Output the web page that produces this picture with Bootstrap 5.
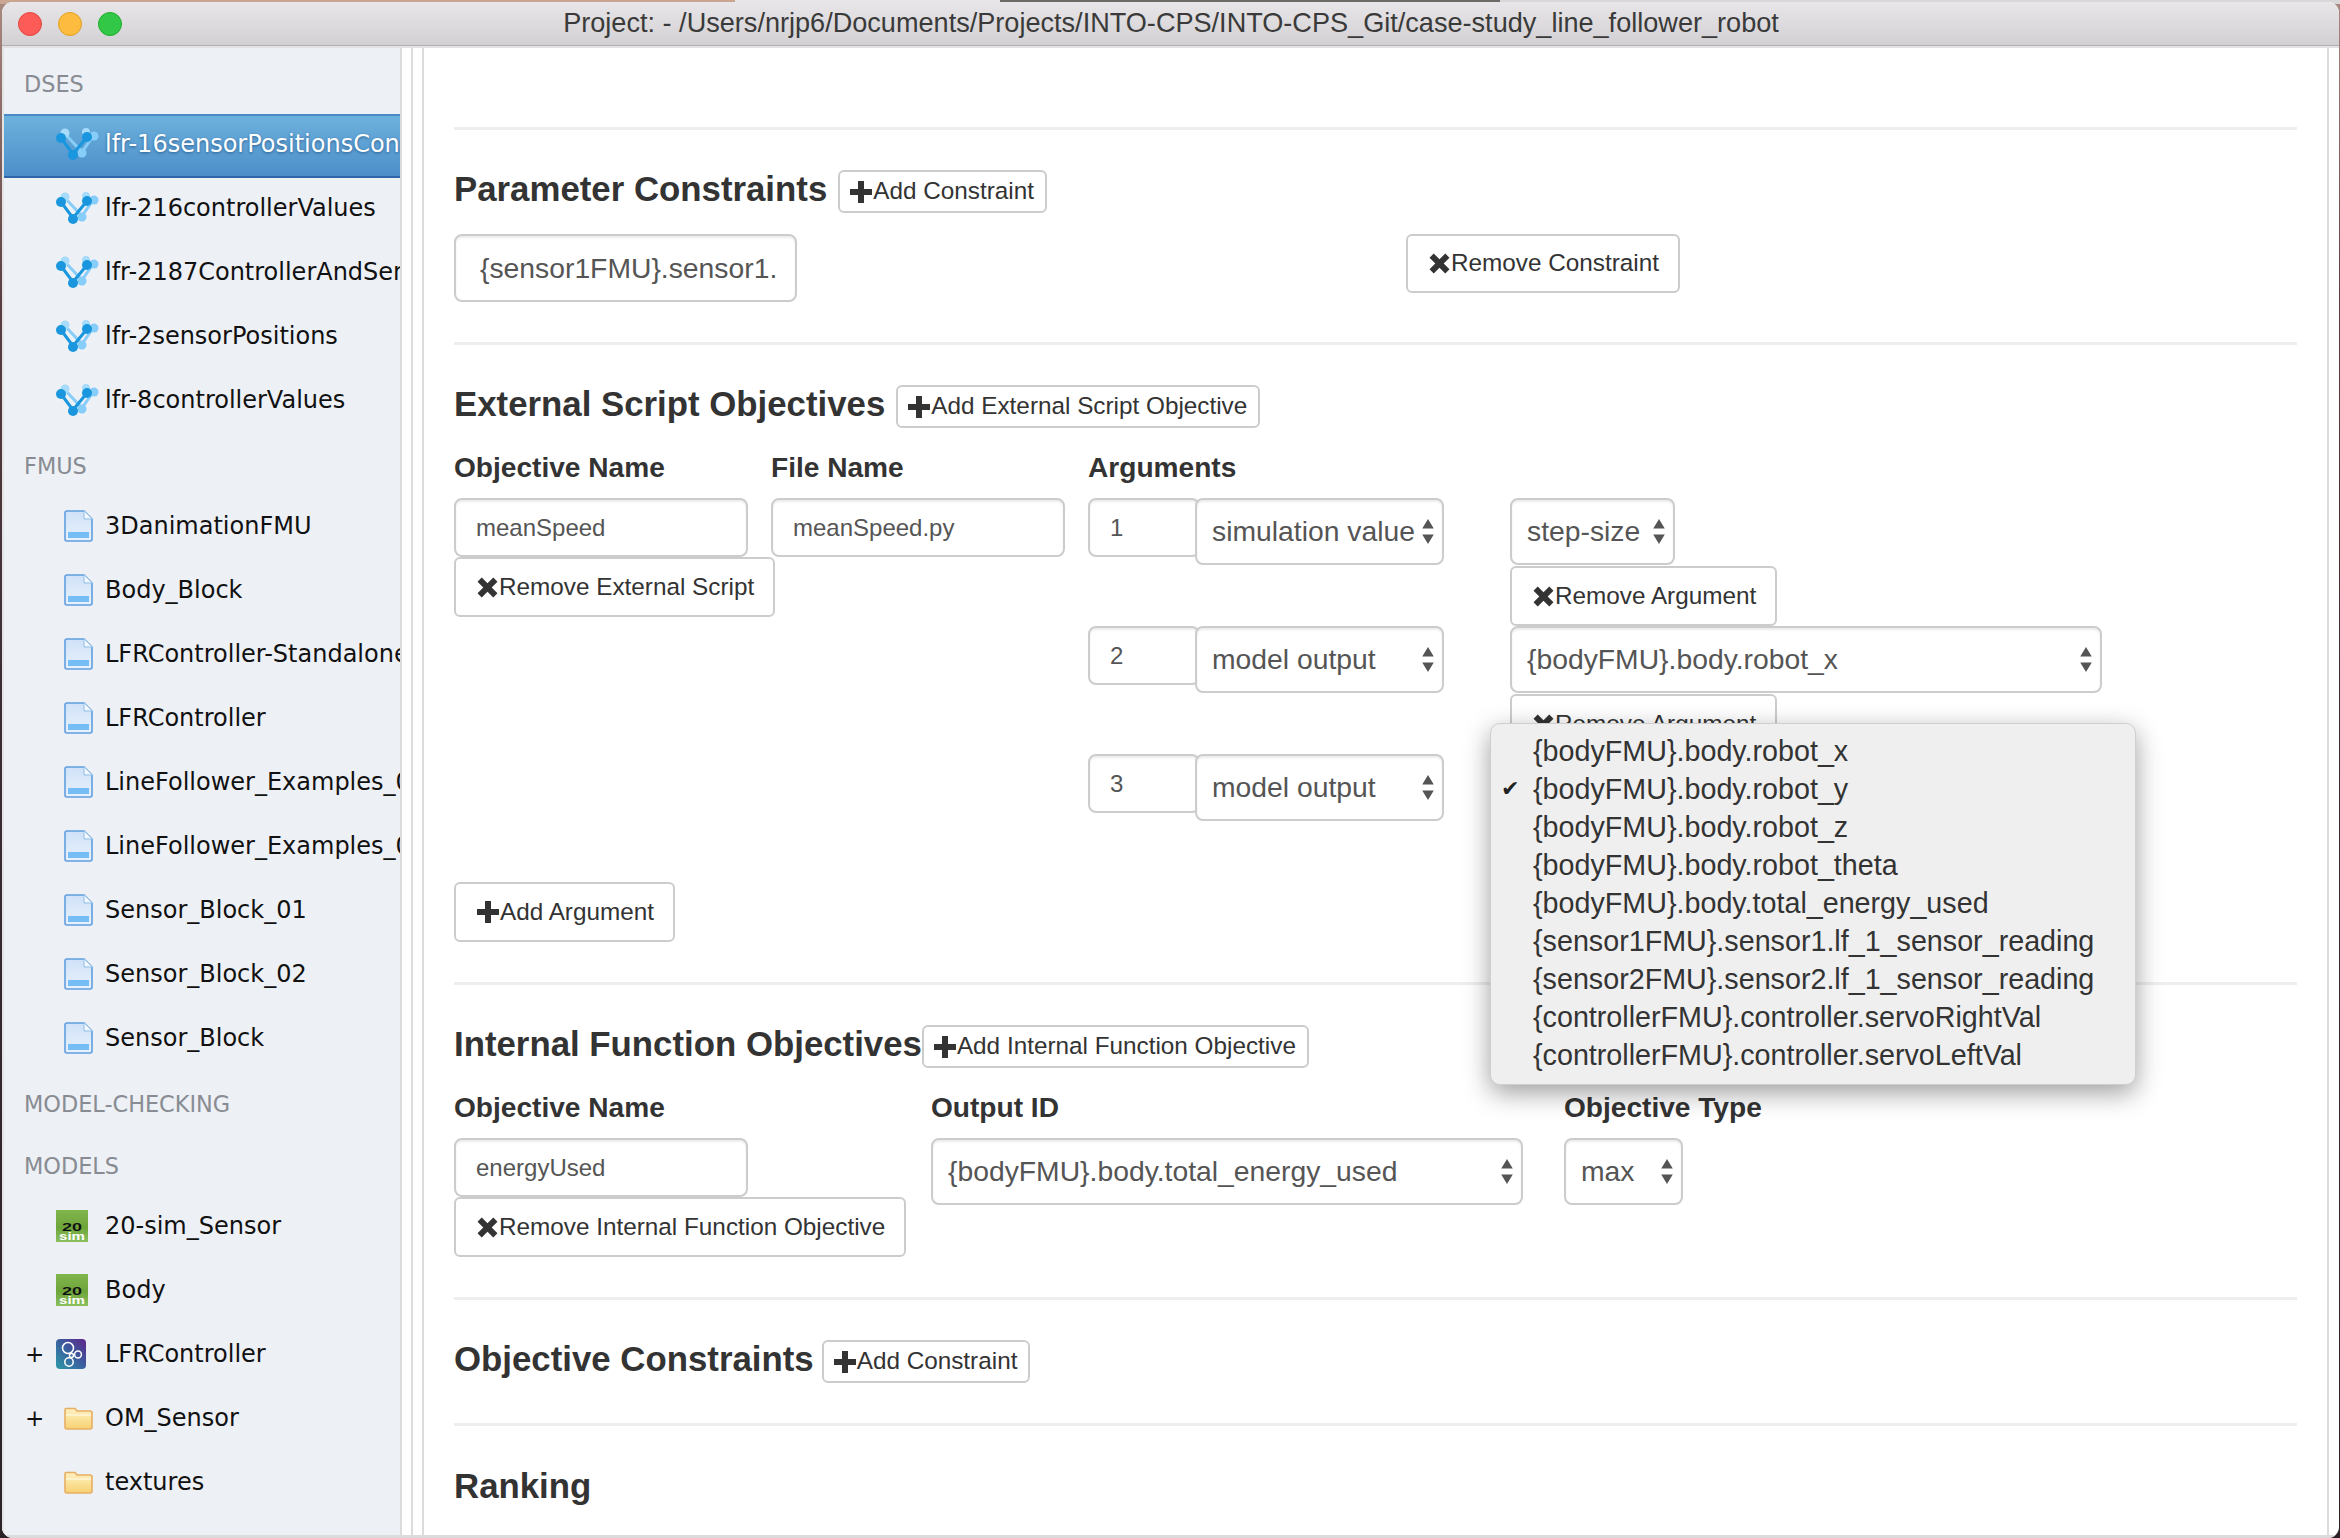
<!DOCTYPE html>
<html lang="en">
<head>
    <meta charset="UTF-8">
    <meta name="viewport" content="width=device-width, initial-scale=1.0">
    <title>INTO-CPS App - DSE configuration</title>
    <link href="https://cdn.jsdelivr.net/npm/bootstrap@5.3.0/dist/css/bootstrap.min.css" rel="stylesheet">
    <style>
        html, body {
            height: 1538px;
            overflow: hidden;
        }
        body {
            margin: 0;
            font-family: "Liberation Sans", Arial, sans-serif;
            color: #333;
            background:
                linear-gradient(90deg, #c8a692 0 735px, #e6e6e6 735px 1000px, #6e6a68 1000px 1500px, #d8d8d8 1500px 2340px) top left / 100% 4px no-repeat,
                linear-gradient(180deg, #a88a80 0, #5a3d42 300px, #3a2c34 700px, #2b2226 1538px);
        }
        .svg-sprite { display: block; width: 0; height: 0; overflow: hidden; }
        .app-window {
            width: 2337px;
            height: 1536px;
            margin: 2px 0 0 2px;
            background: #fff;
            border-radius: 11px;
            overflow: hidden;
        }
        .title-bar {
            height: 44px;
            flex: none;
            background: linear-gradient(180deg, #e8e6e8, #d2d0d2);
            border-bottom: 1px solid #b0aeb0;
        }
        .light-dot { width: 24px; height: 24px; border-radius: 50%; border: 1px solid; }
        .light-close { background: #fc5b57; border-color: #e2463f; }
        .light-min { background: #fdbc40; border-color: #dfa023; }
        .light-max { background: #33c748; border-color: #1dad2b; }
        .traffic-lights { gap: 16px; padding-left: 16px; width: 0; }
        .title-text {
            font-size: 27.1px;
            color: #3a3a3a;
            padding-right: 15px;
        }
        .pane-wrap {
            height: 1492px;
            border-top: 2px solid #e2e2e2;
            border-bottom: 3px solid #dcdcdc;
        }

        /* left tree */
        .side-pane {
            width: 400px;
            flex: none;
            background: #edf0f5;
            border-left: 2px solid #e4e4e4;
            border-right: 2px solid #dcdcdc;
            padding-top: 20px;
            font-family: "DejaVu Sans", Verdana, sans-serif;
            overflow: hidden;
        }
        .tree-head {
            font-size: 22.4px;
            line-height: 32px;
            color: #888c92;
            padding-left: 20px;
            margin-bottom: 11px;
        }
        .tree-head-first { margin-bottom: 14px; }
        .tree-head-fmus { margin-top: 16px; }
        .tree-head-mc { margin-top: 19px; }
        .tree-head-models { margin-top: 30px; margin-bottom: 12px; }
        .tree-row {
            height: 64px;
            padding-left: 21px;
            font-size: 24px;
            color: #111;
            white-space: nowrap;
        }
        .tree-row-dse { padding-bottom: 5px; }
        .tree-row-file { padding-top: 2px; }
        .tree-row.is-active {
            background: linear-gradient(180deg, #6db1dd, #4c8fca);
            border-top: 2px solid #4a8ac6;
            border-bottom: 2px solid #2f66a9;
            color: #fff;
            text-shadow: 0 1px 3px rgba(0,40,90,.55);
        }
        .tree-exp { width: 31px; flex: none; font-size: 23px; }
        .tree-ico { width: 49px; flex: none; }
        .tree-ico svg { display: block; }
        .ico-inset { margin-left: 8px; }
        .split-gap { width: 11px; flex: none; border-right: 2px solid #dcdcdc; }

        /* form pane */
        .form-pane {
            flex: 1 1 0;
            min-width: 0;
            padding: 79px 30px 0;
            border-right: 2px solid #dcdcdc;
            margin-right: 10px;
            overflow: hidden;
        }
        .form-hr { margin: 0; border: 0; border-top: 3px solid #eee; opacity: 1; }
        .sect-gap { margin-top: 40px; }
        .sect-head { height: 43px; }
        .sect-title {
            font-size: 34.8px;
            font-weight: 700;
            color: #333;
            margin: 0 11px 0 0;
            padding-bottom: 5px;
            white-space: nowrap;
        }
        .sect-title-tight { margin-right: 0; }
        .sect-title-near { margin-right: 8px; }
        .sect-a { margin-top: 40px; }
        .sect-b { margin-top: 41px; }
        .sect-ext { margin-top: 40px; }
        .constraint-row { margin-top: 21px; }
        .fld-label {
            font-size: 28.1px;
            font-weight: 700;
            line-height: 34px;
            margin: 23px 0 13px;
            color: #333;
            white-space: nowrap;
        }
        .form-control, .form-select {
            border: 2px solid #ccc;
            border-radius: 8px;
            color: #555;
            box-shadow: inset 0 2px 2px rgba(0,0,0,.075);
        }
        .form-control { height: 59px; padding: 0 20px; font-size: 24px; }
        .fld-name { width: 294px; }
        .fld-num { width: 112px; flex: none; }
        .fld-constraint { width: 343px; height: 68px; font-size: 28.3px; padding: 0 8px 0 24px; }
        .form-select {
            height: 67px;
            padding: 0 26px 0 15px;
            font-size: 28.3px;
            background-image: url("data:image/svg+xml,%3Csvg xmlns='http://www.w3.org/2000/svg' viewBox='0 0 12 26'%3E%3Cpath fill='%23555' d='M6 0l6 10H0zM6 26L0 16h12z'/%3E%3C/svg%3E");
            background-repeat: no-repeat;
            background-position: right 8px center;
            background-size: 12px 25px;
        }
        .sel-kind { width: 249px; flex: none; margin-left: -5px; }
        .sel-step { width: 165px; }
        .sel-wide { width: 592px; }
        .sel-type { width: 119px; }
        .btn-plain {
            display: inline-flex;
            align-items: center;
            height: 60px;
            padding: 0 19px 0 21px;
            font-size: 24.3px;
            color: #333;
            background: #fff;
            border: 2px solid #ccc;
            border-radius: 6px;
            white-space: nowrap;
        }
        .btn-tiny { height: 43px; padding: 0 11px 0 10px; }
        .btn-rm-constraint { margin-left: 609px; height: 59px; }
        .btn-plain svg { flex: none; margin-right: 1px; }
        .col-obj { width: 317px; flex: none; }
        .col-args { flex: 1 1 0; min-width: 0; }
        .args-list { position: relative; }
        .arg-row { height: 128px; }
        .arg-left { width: 422px; flex: none; }
        .arg-right .btn-plain { margin-top: 1px; }
        .col-int-a { width: 477px; flex: none; }
        .col-int-b { width: 633px; flex: none; }
        .clipped-label { margin-top: 20px; }

        /* open select popup */
        .opt-menu {
            position: absolute;
            left: 402px;
            top: 225px;
            width: 646px;
            margin: 0;
            padding: 8px 0 10px;
            list-style: none;
            background: #efefef;
            border: 1px solid #cfcfcf;
            border-radius: 10px;
            box-shadow: 0 8px 26px rgba(0,0,0,.38);
            font-size: 28.7px;
            line-height: 38px;
            color: #333;
            z-index: 5;
        }
        .opt-menu li { display: flex; padding-left: 10px; white-space: nowrap; }
        .opt-check { width: 32px; flex: none; font-family: "DejaVu Sans", sans-serif; font-size: 22px; color: #222; }
    </style>
</head>
<body>
    <!-- icons used over and over in the tree -->
    <svg class="svg-sprite" xmlns="http://www.w3.org/2000/svg">
        <defs>
            <linearGradient id="gradFile" x1="0" y1="0" x2="0" y2="1">
                <stop offset="0" stop-color="#cfe2f8"/>
                <stop offset="1" stop-color="#e8f1fb"/>
            </linearGradient>
            <linearGradient id="gradSim" x1="0" y1="0" x2="0" y2="1">
                <stop offset="0" stop-color="#80b54c"/>
                <stop offset=".55" stop-color="#6ea53a"/>
                <stop offset="1" stop-color="#8cc060"/>
            </linearGradient>
            <linearGradient id="gradCosim" x1="0" y1="1" x2="1" y2="0">
                <stop offset="0" stop-color="#2a9aa8"/>
                <stop offset=".55" stop-color="#3c5a9e"/>
                <stop offset="1" stop-color="#5f2389"/>
            </linearGradient>
            <linearGradient id="gradFolder" x1="0" y1="0" x2="0" y2="1">
                <stop offset="0" stop-color="#fdf0c4"/>
                <stop offset=".5" stop-color="#fbe39a"/>
                <stop offset="1" stop-color="#f8cf72"/>
            </linearGradient>
        </defs>
        <symbol id="icoDse" viewBox="0 0 44 32">
            <path d="M9 6 L26 24 L37 8" fill="none" stroke="#86cdf9" stroke-width="3"/>
            <circle cx="9" cy="5" r="4.5" fill="#a6dbfb"/>
            <circle cx="30" cy="4" r="4" fill="#a6dbfb"/>
            <circle cx="38" cy="8" r="4.5" fill="#86cdf9"/>
            <circle cx="26" cy="25" r="4.5" fill="#86cdf9"/>
            <path d="M5 10 L17 26 L31 9" fill="none" stroke="#1a96de" stroke-width="3"/>
            <circle cx="5" cy="10" r="5" fill="#1a96de"/>
            <circle cx="31" cy="9" r="5" fill="#1a96de"/>
            <circle cx="17" cy="27" r="5" fill="#1a96de"/>
        </symbol>
        <symbol id="icoFile" viewBox="0 0 29 32">
            <path d="M3 1 H20 L28 9 V29 Q28 31 26 31 H3 Q1 31 1 29 V3 Q1 1 3 1Z" fill="url(#gradFile)" stroke="#5f9fe0" stroke-width="1.6"/>
            <path d="M20 1 V9 H28" fill="#f4f8fd" stroke="#8fbcea" stroke-width="1"/>
            <rect x="4" y="22" width="21" height="6" fill="#74bdf5"/>
        </symbol>
        <symbol id="icoSim" viewBox="0 0 32 32">
            <rect width="32" height="32" fill="url(#gradSim)"/>
            <text x="16" y="21" text-anchor="middle" font-family="Liberation Sans, sans-serif" font-size="11" font-weight="700" textLength="20" lengthAdjust="spacingAndGlyphs" fill="#111">20</text>
            <text x="16" y="30" text-anchor="middle" font-family="Liberation Sans, sans-serif" font-size="11" font-weight="700" textLength="26" lengthAdjust="spacingAndGlyphs" fill="#fff">sim</text>
        </symbol>
        <symbol id="icoCosim" viewBox="0 0 30 30">
            <rect width="30" height="30" rx="4" fill="url(#gradCosim)"/>
            <g fill="none" stroke="#fff" stroke-width="1.5">
                <circle cx="12" cy="9" r="5.5"/>
                <circle cx="22" cy="15.5" r="3.4"/>
                <circle cx="15.5" cy="16.5" r="2"/>
                <circle cx="13" cy="23" r="4.2"/>
            </g>
        </symbol>
        <symbol id="icoFolder" viewBox="0 0 29 23">
            <path d="M2 1.5 H11 L13 4 H26 Q28 4 28 6 V20 Q28 22 26 22 H3 Q1 22 1 20 V3 Q1 1.5 2 1.5Z" fill="url(#gradFolder)" stroke="#e8ae62" stroke-width="1.6"/>
            <path d="M2 8 H27" stroke="#fff6da" stroke-width="1.4"/>
        </symbol>
        <symbol id="glyphPlus" viewBox="0 0 22 22">
            <path d="M8 0 H14 V8 H22 V14 H14 V22 H8 V14 H0 V8 H8Z"/>
        </symbol>
        <symbol id="glyphCross" viewBox="0 0 20 20">
            <path d="M4.5 .5 L10 6 L15.5 .5 L19.5 4.5 L14 10 L19.5 15.5 L15.5 19.5 L10 14 L4.5 19.5 L.5 15.5 L6 10 L.5 4.5Z"/>
        </symbol>
    </svg>

    <div class="app-window d-flex flex-column">
        <header class="title-bar d-flex align-items-center">
            <div class="traffic-lights d-flex">
                <span class="light-dot light-close flex-shrink-0"></span>
                <span class="light-dot light-min flex-shrink-0"></span>
                <span class="light-dot light-max flex-shrink-0"></span>
            </div>
            <div class="title-text flex-fill text-center text-nowrap">Project: - /Users/nrjp6/Documents/Projects/INTO-CPS/INTO-CPS_Git/case-study_line_follower_robot</div>
        </header>

        <div class="pane-wrap d-flex">
            <!-- Project tree -->
            <aside class="side-pane">
                <div class="tree-head tree-head-first">DSES</div>
                <div class="tree-row tree-row-dse is-active d-flex align-items-center"><span class="tree-exp"></span><span class="tree-ico"><svg width="44" height="32"><use href="#icoDse"/></svg></span>lfr-16sensorPositionsConstraint</div>
                <div class="tree-row tree-row-dse d-flex align-items-center"><span class="tree-exp"></span><span class="tree-ico"><svg width="44" height="32"><use href="#icoDse"/></svg></span>lfr-216controllerValues</div>
                <div class="tree-row tree-row-dse d-flex align-items-center"><span class="tree-exp"></span><span class="tree-ico"><svg width="44" height="32"><use href="#icoDse"/></svg></span>lfr-2187ControllerAndSensors</div>
                <div class="tree-row tree-row-dse d-flex align-items-center"><span class="tree-exp"></span><span class="tree-ico"><svg width="44" height="32"><use href="#icoDse"/></svg></span>lfr-2sensorPositions</div>
                <div class="tree-row tree-row-dse d-flex align-items-center"><span class="tree-exp"></span><span class="tree-ico"><svg width="44" height="32"><use href="#icoDse"/></svg></span>lfr-8controllerValues</div>

                <div class="tree-head tree-head-fmus">FMUS</div>
                <div class="tree-row tree-row-file d-flex align-items-center"><span class="tree-exp"></span><span class="tree-ico"><svg class="ico-inset" width="29" height="32"><use href="#icoFile"/></svg></span>3DanimationFMU</div>
                <div class="tree-row tree-row-file d-flex align-items-center"><span class="tree-exp"></span><span class="tree-ico"><svg class="ico-inset" width="29" height="32"><use href="#icoFile"/></svg></span>Body_Block</div>
                <div class="tree-row tree-row-file d-flex align-items-center"><span class="tree-exp"></span><span class="tree-ico"><svg class="ico-inset" width="29" height="32"><use href="#icoFile"/></svg></span>LFRController-Standalone</div>
                <div class="tree-row tree-row-file d-flex align-items-center"><span class="tree-exp"></span><span class="tree-ico"><svg class="ico-inset" width="29" height="32"><use href="#icoFile"/></svg></span>LFRController</div>
                <div class="tree-row tree-row-file d-flex align-items-center"><span class="tree-exp"></span><span class="tree-ico"><svg class="ico-inset" width="29" height="32"><use href="#icoFile"/></svg></span>LineFollower_Examples_01</div>
                <div class="tree-row tree-row-file d-flex align-items-center"><span class="tree-exp"></span><span class="tree-ico"><svg class="ico-inset" width="29" height="32"><use href="#icoFile"/></svg></span>LineFollower_Examples_02</div>
                <div class="tree-row tree-row-file d-flex align-items-center"><span class="tree-exp"></span><span class="tree-ico"><svg class="ico-inset" width="29" height="32"><use href="#icoFile"/></svg></span>Sensor_Block_01</div>
                <div class="tree-row tree-row-file d-flex align-items-center"><span class="tree-exp"></span><span class="tree-ico"><svg class="ico-inset" width="29" height="32"><use href="#icoFile"/></svg></span>Sensor_Block_02</div>
                <div class="tree-row tree-row-file d-flex align-items-center"><span class="tree-exp"></span><span class="tree-ico"><svg class="ico-inset" width="29" height="32"><use href="#icoFile"/></svg></span>Sensor_Block</div>

                <div class="tree-head tree-head-mc">MODEL-CHECKING</div>
                <div class="tree-head tree-head-models">MODELS</div>
                <div class="tree-row d-flex align-items-center"><span class="tree-exp"></span><span class="tree-ico"><svg width="32" height="32"><use href="#icoSim"/></svg></span>20-sim_Sensor</div>
                <div class="tree-row d-flex align-items-center"><span class="tree-exp"></span><span class="tree-ico"><svg width="32" height="32"><use href="#icoSim"/></svg></span>Body</div>
                <div class="tree-row d-flex align-items-center"><span class="tree-exp">+</span><span class="tree-ico"><svg width="30" height="30"><use href="#icoCosim"/></svg></span>LFRController</div>
                <div class="tree-row d-flex align-items-center"><span class="tree-exp">+</span><span class="tree-ico"><svg class="ico-inset" width="29" height="23"><use href="#icoFolder"/></svg></span>OM_Sensor</div>
                <div class="tree-row d-flex align-items-center"><span class="tree-exp"></span><span class="tree-ico"><svg class="ico-inset" width="29" height="23"><use href="#icoFolder"/></svg></span>textures</div>
            </aside>
            <div class="split-gap"></div>
            <div class="split-gap"></div>

            <!-- DSE configuration form -->
            <main class="form-pane">
                <hr class="form-hr">

                <section class="sect-a">
                    <div class="sect-head d-flex align-items-center">
                        <h3 class="sect-title">Parameter Constraints</h3>
                        <button type="button" class="btn btn-plain btn-tiny"><svg width="22" height="22" fill="#333"><use href="#glyphPlus"/></svg>Add Constraint</button>
                    </div>
                    <div class="d-flex constraint-row">
                        <input class="form-control fld-constraint" type="text" value="{sensor1FMU}.sensor1.">
                        <button type="button" class="btn btn-plain btn-rm-constraint"><svg width="21" height="21" fill="#333"><use href="#glyphCross"/></svg>Remove Constraint</button>
                    </div>
                </section>
                <hr class="form-hr sect-gap">

                <section class="sect-ext">
                    <div class="sect-head d-flex align-items-center">
                        <h3 class="sect-title">External Script Objectives</h3>
                        <button type="button" class="btn btn-plain btn-tiny"><svg width="22" height="22" fill="#333"><use href="#glyphPlus"/></svg>Add External Script Objective</button>
                    </div>
                    <div class="d-flex">
                        <div class="col-obj">
                            <label class="form-label fld-label d-block">Objective Name</label>
                            <input class="form-control fld-name" type="text" value="meanSpeed">
                            <button type="button" class="btn btn-plain"><svg width="21" height="21" fill="#333"><use href="#glyphCross"/></svg>Remove External Script</button>
                        </div>
                        <div class="col-obj">
                            <label class="form-label fld-label d-block">File Name</label>
                            <input class="form-control fld-name" type="text" value="meanSpeed.py">
                        </div>
                        <div class="col-args">
                            <label class="form-label fld-label d-block">Arguments</label>
                            <div class="args-list">
                                <div class="arg-row d-flex">
                                    <div class="arg-left d-flex align-items-start">
                                        <input class="form-control fld-num" type="text" value="1">
                                        <select class="form-select sel-kind"><option>simulation value</option></select>
                                    </div>
                                    <div class="arg-right d-flex flex-column align-items-start">
                                        <select class="form-select sel-step"><option>step-size</option></select>
                                        <button type="button" class="btn btn-plain"><svg width="21" height="21" fill="#333"><use href="#glyphCross"/></svg>Remove Argument</button>
                                    </div>
                                </div>
                                <div class="arg-row d-flex">
                                    <div class="arg-left d-flex align-items-start">
                                        <input class="form-control fld-num" type="text" value="2">
                                        <select class="form-select sel-kind"><option>model output</option></select>
                                    </div>
                                    <div class="arg-right d-flex flex-column align-items-start">
                                        <select class="form-select sel-wide"><option>{bodyFMU}.body.robot_x</option></select>
                                        <button type="button" class="btn btn-plain"><svg width="21" height="21" fill="#333"><use href="#glyphCross"/></svg>Remove Argument</button>
                                    </div>
                                </div>
                                <div class="arg-row d-flex">
                                    <div class="arg-left d-flex align-items-start">
                                        <input class="form-control fld-num" type="text" value="3">
                                        <select class="form-select sel-kind"><option>model output</option></select>
                                    </div>
                                    <div class="arg-right d-flex flex-column align-items-start">
                                        <select class="form-select sel-wide"><option>{bodyFMU}.body.robot_y</option></select>
                                        <button type="button" class="btn btn-plain"><svg width="21" height="21" fill="#333"><use href="#glyphCross"/></svg>Remove Argument</button>
                                    </div>
                                </div>
                                <ul class="opt-menu">
                                    <li><span class="opt-check"></span>{bodyFMU}.body.robot_x</li>
                                    <li><span class="opt-check">✔</span>{bodyFMU}.body.robot_y</li>
                                    <li><span class="opt-check"></span>{bodyFMU}.body.robot_z</li>
                                    <li><span class="opt-check"></span>{bodyFMU}.body.robot_theta</li>
                                    <li><span class="opt-check"></span>{bodyFMU}.body.total_energy_used</li>
                                    <li><span class="opt-check"></span>{sensor1FMU}.sensor1.lf_1_sensor_reading</li>
                                    <li><span class="opt-check"></span>{sensor2FMU}.sensor2.lf_1_sensor_reading</li>
                                    <li><span class="opt-check"></span>{controllerFMU}.controller.servoRightVal</li>
                                    <li><span class="opt-check"></span>{controllerFMU}.controller.servoLeftVal</li>
                                </ul>
                            </div>
                        </div>
                    </div>
                    <button type="button" class="btn btn-plain"><svg width="22" height="22" fill="#333"><use href="#glyphPlus"/></svg>Add Argument</button>
                </section>
                <hr class="form-hr sect-gap">

                <section class="sect-a">
                    <div class="sect-head d-flex align-items-center">
                        <h3 class="sect-title sect-title-tight">Internal Function Objectives</h3>
                        <button type="button" class="btn btn-plain btn-tiny"><svg width="22" height="22" fill="#333"><use href="#glyphPlus"/></svg>Add Internal Function Objective</button>
                    </div>
                    <div class="d-flex">
                        <div class="col-int-a">
                            <label class="form-label fld-label d-block">Objective Name</label>
                            <input class="form-control fld-name" type="text" value="energyUsed">
                            <button type="button" class="btn btn-plain"><svg width="21" height="21" fill="#333"><use href="#glyphCross"/></svg>Remove Internal Function Objective</button>
                        </div>
                        <div class="col-int-b">
                            <label class="form-label fld-label d-block">Output ID</label>
                            <select class="form-select sel-wide"><option>{bodyFMU}.body.total_energy_used</option></select>
                        </div>
                        <div>
                            <label class="form-label fld-label d-block">Objective Type</label>
                            <select class="form-select sel-type"><option>max</option></select>
                        </div>
                    </div>
                </section>
                <hr class="form-hr sect-gap">

                <section class="sect-a">
                    <div class="sect-head d-flex align-items-center">
                        <h3 class="sect-title sect-title-near">Objective Constraints</h3>
                        <button type="button" class="btn btn-plain btn-tiny"><svg width="22" height="22" fill="#333"><use href="#glyphPlus"/></svg>Add Constraint</button>
                    </div>
                </section>
                <hr class="form-hr sect-gap">

                <section class="sect-b">
                    <div class="sect-head d-flex align-items-center">
                        <h3 class="sect-title">Ranking</h3>
                    </div>
                    <div class="d-flex">
                        <div class="col-int-a"><label class="form-label fld-label clipped-label d-block">Ranking Method</label></div>
                        <div class="col-int-b"><label class="form-label fld-label clipped-label d-block">Dimensions</label></div>
                    </div>
                </section>
            </main>
        </div>
    </div>

    <script src="https://cdn.jsdelivr.net/npm/bootstrap@5.3.0/dist/js/bootstrap.bundle.min.js"></script>
</body>
</html>
